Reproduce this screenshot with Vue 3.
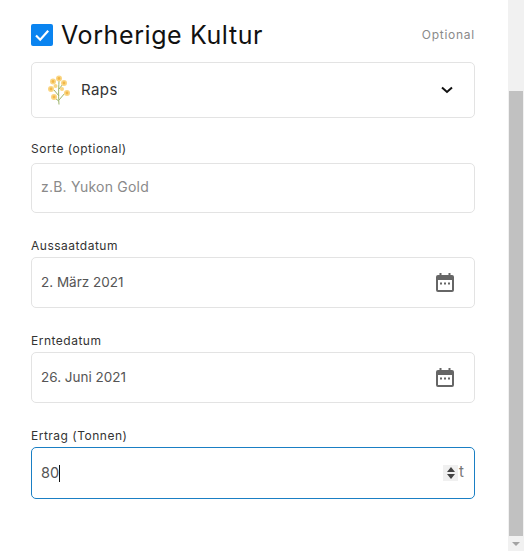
<script setup>
const fields = [
  { label: 'Aussaatdatum', value: '2. März 2021' },
  { label: 'Erntedatum', value: '26. Juni 2021' },
]
</script>

<template>
  <div class="page">
    <main class="form">
      <header class="head">
        <span class="check">
          <svg viewBox="0 0 22 22" width="22" height="22"><path d="M5 11.5l4.2 4.2L17.2 6.8" fill="none" stroke="#fff" stroke-width="2.2"/></svg>
        </span>
        <h1 class="title">Vorherige Kultur</h1>
        <span class="optional">Optional</span>
      </header>

      <div class="select">
        <svg class="plant" viewBox="0 0 24 30" width="24" height="30">
          <path d="M12 29.500C11.500 23 11.500 16 12 6M12 25l6-7M12 21L7 15M12 14l4-5M11.800 26l-4-3" fill="none" stroke="#9cb36a" stroke-width="1"/>
          <g fill="#fad684">
            <circle cx="12" cy="3.500" r="3"/><circle cx="6" cy="6.500" r="3"/><circle cx="17" cy="8" r="3"/>
            <circle cx="4" cy="14" r="3"/><circle cx="20" cy="18" r="3"/><circle cx="7" cy="22" r="3"/>
            <circle cx="8.500" cy="11" r="2"/><circle cx="15" cy="14" r="2"/>
          </g>
          <g fill="#f2b648"><circle cx="12" cy="3.500" r="1.400"/><circle cx="6" cy="6.500" r="1.400"/><circle cx="17" cy="8" r="1.400"/><circle cx="4" cy="14" r="1.400"/><circle cx="20" cy="18" r="1.400"/><circle cx="7" cy="22" r="1.400"/></g>
        </svg>
        <span class="select-text">Raps</span>
        <svg class="chev" viewBox="0 0 14 10" width="14" height="10"><path d="M2 2.500l5 4.500 5-4.500" fill="none" stroke="#111" stroke-width="2"/></svg>
      </div>

      <div class="field first">
        <label class="label">Sorte (optional)</label>
        <div class="box short"><span class="placeholder">z.B. Yukon Gold</span></div>
      </div>

      <div v-for="f in fields" :key="f.label" class="field">
        <label class="label">{{ f.label }}</label>
        <div class="box">
          <span class="value">{{ f.value }}</span>
          <svg class="cal" viewBox="0 0 18 19" width="18" height="19">
            <path fill="#666" fill-rule="evenodd" d="M3.500 0h2v2h7V0h2v2h1.500a2 2 0 0 1 2 2v13a2 2 0 0 1-2 2H2a2 2 0 0 1-2-2V4a2 2 0 0 1 2-2h1.500zM2 7v10h14V7z"/>
            <rect x="4" y="9.500" width="2" height="2" fill="#666"/><rect x="8" y="9.500" width="2" height="2" fill="#666"/><rect x="12" y="9.500" width="2" height="2" fill="#666"/>
          </svg>
        </div>
      </div>

      <div class="field">
        <label class="label">Ertrag (Tonnen)</label>
        <div class="box focus">
          <span class="value num">80</span><span class="caret"></span>
          <span class="spin">
            <svg viewBox="0 0 8 12" width="8" height="12"><path d="M4 0l4 5H0zM4 12L0 7h8z" fill="#444"/></svg>
          </span>
          <span class="unit">t</span>
        </div>
      </div>
    </main>

    <aside class="scrollbar">
      <span class="thumb"></span>
      <span class="arrow"></span>
    </aside>
  </div>
</template>

<style scoped>
.page {
  display: flex;
  width: 524px;
  height: 551px;
  overflow: hidden;
  background: #fff;
  font-family: "Inter", "Open Sans", "Liberation Sans", sans-serif;
  color: #333;
}
.form {
  flex: 1;
  min-width: 0;
  padding: 24px 33px 0 31px;
  box-sizing: border-box;
}
.head {
  display: flex;
  align-items: center;
  height: 22px;
}
.check {
  width: 22px;
  height: 22px;
  background: #0a84f0;
  border-radius: 2px;
  flex: none;
}
.check svg { display: block; }
.title {
  margin: 0 0 0 8px;
  font-size: 25px;
  font-weight: 400;
  letter-spacing: 0.6px;
  color: #111;
  white-space: nowrap;
}
.optional {
  margin-left: auto;
  margin-bottom: 2px;
  font-size: 12px;
  color: #8a8a8a;
  letter-spacing: 0.75px;
}
.select {
  display: flex;
  align-items: center;
  height: 56px;
  margin-top: 16px;
  padding: 0 20px 0 15px;
  border: 1px solid #e3e3e3;
  border-radius: 5px;
  box-sizing: border-box;
}
.plant { flex: none; }
.select-text {
  margin-left: 10px;
  font-size: 15px;
  letter-spacing: 0.4px;
  color: #333;
  padding-bottom: 2px;
}
.chev { margin-left: auto; }
.field { margin-top: 25px; }
.field.first { margin-top: 23px; }
.label {
  display: block;
  height: 15px;
  line-height: 15px;
  font-size: 12px;
  letter-spacing: 0.5px;
  color: #333;
  margin-bottom: 4px;
}
.field.first .label { margin-bottom: 7px; }
.box {
  display: flex;
  align-items: center;
  height: 51px;
  padding: 0 20px 0 9px;
  border: 1px solid #e3e3e3;
  border-radius: 5px;
  box-sizing: border-box;
  font-size: 13.500px;
}
.box.short { height: 50px; }
.placeholder {
  color: #8a8a8a;
  font-size: 14px;
  letter-spacing: 0.2px;
  padding-bottom: 4px;
}
.value { color: #555; padding-bottom: 2px; }
.cal { margin-left: auto; }
.box.focus {
  height: 52px;
  border-color: #1a7fc4;
  padding-right: 10px;
}
.num { font-size: 14.500px; }
.caret {
  width: 1px;
  height: 17px;
  background: #111;
}
.spin {
  display: flex;
  align-items: center;
  justify-content: center;
  margin-left: auto;
  width: 15px;
  height: 16px;
  background: #f0f0f0;
}
.unit {
  margin-left: 1px;
  margin-bottom: 3px;
  font-size: 15px;
  color: #777;
}
.scrollbar {
  flex: none;
  width: 16px;
  display: flex;
  flex-direction: column;
  align-items: center;
  background: #f1f1f1;
  padding-top: 91px;
  box-sizing: border-box;
}
.thumb {
  width: 14px;
  height: 445px;
  background: #c1c1c1;
}
.arrow {
  margin-top: 6px;
  width: 0;
  height: 0;
  border-left: 4px solid transparent;
  border-right: 4px solid transparent;
  border-top: 4px solid #a3a3a3;
}
</style>
